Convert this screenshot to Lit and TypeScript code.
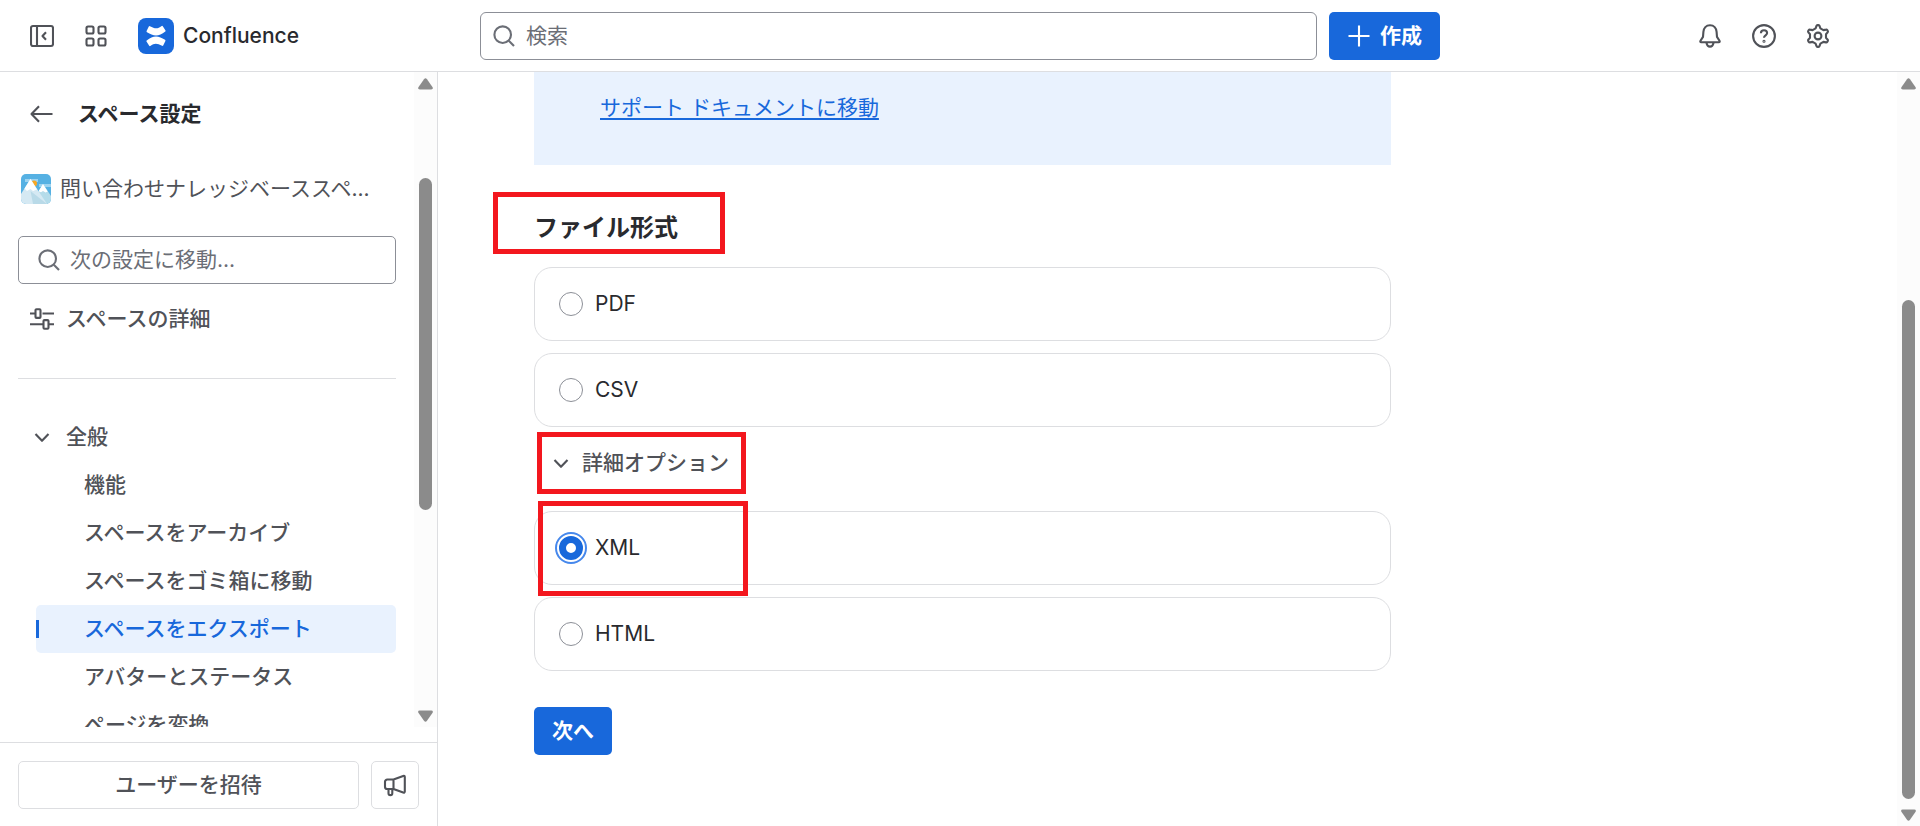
import { LitElement, html, css, svg, nothing } from "lit";
import { customElement, property, state } from "lit/decorators.js";
import { classMap } from "lit/directives/class-map.js";

const glyphs = {
  collapse: svg`<rect x="1" y="2" width="22" height="20" rx="2"/><path d="M7 2v20M16 8.2 12.5 12l3.500 3.800"/>`,
  apps: svg`<rect x="2.500" y="2.500" width="7" height="7" rx="1.500"/><rect x="14.500" y="2.500" width="7" height="7" rx="1.500"/><rect x="2.500" y="14.500" width="7" height="7" rx="1.500"/><rect x="14.500" y="14.500" width="7" height="7" rx="1.500"/>`,
  search: svg`<circle cx="10.700" cy="10.700" r="8.300"/><path d="m16.800 16.800 5.200 5.200"/>`,
  plus: svg`<path d="M12 1.500v21M1.500 12h21"/>`,
  bell: svg`<path d="M12 1.200c-4 0-6.300 3-6.600 6.600l-.4 5.100-2.500 3.900c-.5.800-.2 1.500.7 1.500h17.600c.9 0 1.200-.7.700-1.500L19 12.900l-.4-5.100C18.300 4.200 16 1.200 12 1.200Z"/><path d="M8.500 18.800c.4 2.400 1.700 3.800 3.500 3.800s3.100-1.400 3.500-3.800"/>`,
  help: svg`<circle cx="12" cy="12" r="10.900"/><path d="M8.900 9.200c0-1.700 1.400-2.900 3.100-2.900s3.100 1.200 3.100 2.800c0 2.200-3.100 2.300-3.100 4.700"/><circle cx="12" cy="17.300" r=".5"/>`,
  settings: svg`<circle cx="12" cy="12" r="3.400"/><path d="M10.500 1.900q.2-.8 1-.8h1q.8 0 1 .8l.9 2.500 3 1.700 2.600-.5q.8-.2 1.200.5l.6 1q.4.700-.2 1.300L20 10.300v3.400l1.600 1.900q.6.600.2 1.300l-.6 1q-.4.700-1.200.5l-2.600-.5-3 1.700-.9 2.500q-.2.800-1 .8h-1q-.8 0-1-.8l-.9-2.500-3-1.700-2.600.5q-.8.200-1.200-.5l-.6-1q-.4-.7.200-1.300L4 13.700v-3.400L2.400 8.400q-.6-.6-.2-1.300l.6-1q.4-.7 1.200-.5l2.600.5 3-1.700Z"/>`,
  back: svg`<path d="M22.500 12h-21M9 4.300 1.500 12 9 19.700"/>`,
  sliders: svg`<path d="M0 6.500h5M12.500 6.500H24M0 17.300h13M19 17.300h5"/><rect x="5.500" y="2.300" width="5" height="8.600" rx="1"/><rect x="13.500" y="13.100" width="5" height="8.600" rx="1"/>`,
  chevron: svg`<path d="m5.500 9 6.500 6.800L18.500 9"/>`,
  megaphone: svg`<path d="M10.500 6.500H4.300A2.300 2.300 0 0 0 2 8.800v4.900A2.300 2.300 0 0 0 4.300 16h6.200L20.200 19.600c.9.300 1.600-.1 1.600-1V3.900c0-.9-.7-1.300-1.600-1ZM10.500 6.500V16M5.500 16v4.200c0 1.100.7 1.900 1.900 1.900s1.900-.8 1.900-1.900V16"/>`,
} as const;

type GlyphName = keyof typeof glyphs;

@customElement("ui-icon")
export class UiIcon extends LitElement {
  static styles = css`
    :host {
      display: inline-flex;
      flex: none;
    }
    .glyph {
      width: 24px;
      height: 24px;
      fill: none;
      stroke: currentColor;
      stroke-width: 2.1;
      stroke-linejoin: round;
    }
  `;

  @property() name: GlyphName = "search";

  render() {
    return html`<svg class="glyph" viewBox="0 0 24 24" aria-hidden="true">${glyphs[this.name]}</svg>`;
  }
}

@customElement("scroll-rail")
export class ScrollRail extends LitElement {
  static styles = css`
    :host {
      display: flex;
      flex-direction: column;
      align-items: center;
      flex: none;
      width: 23px;
      box-sizing: border-box;
      padding: 6px 0 5px;
      background: #fcfcfc;
    }
    .arrow {
      width: 15px;
      height: 12px;
      fill: #8b8b8b;
      flex: none;
    }
    .track {
      flex: 1;
      width: 13px;
      margin: 10px 0;
      display: flex;
      flex-direction: column;
    }
    .thumb {
      border-radius: 7px;
      background: #8b8b8b;
    }
  `;

  @property({ type: Number }) before = 0;
  @property({ type: Number }) size = 50;

  render() {
    return html`
      <svg class="arrow" viewBox="0 0 15 12"><path d="M6 1.200q1.500-2 3 0l5.600 8q1 2.300-1.400 2.300H1.800Q-.6 11.500.4 9.200Z"/></svg>
      <div class="track">
        <div style="flex: ${this.before} 0 0"></div>
        <div class="thumb" style="flex: ${this.size} 0 0"></div>
        <div style="flex: ${100 - this.before - this.size} 0 0"></div>
      </div>
      <svg class="arrow" viewBox="0 0 15 12"><path d="M6 10.800q1.500 2 3 0l5.600-8Q15.600.5 13.200.5H1.800Q-.6.5.4 2.800Z"/></svg>
    `;
  }
}

@customElement("app-root")
export class AppRoot extends LitElement {
  static styles = css`
    :host {
      display: flex;
      flex-direction: column;
      height: 100vh;
      overflow: hidden;
      background: #fff;
      color: #292a2e;
      font: 400 21px/30px Inter, "Noto Sans CJK JP", sans-serif;
    }
    * {
      box-sizing: border-box;
    }
    button,
    input {
      font: inherit;
      color: inherit;
    }
    button {
      display: flex;
      align-items: center;
      justify-content: center;
      height: 48px;
      padding: 0 18px;
      border: 0;
      border-radius: 5px;
      background: none;
      font-weight: 500;
      white-space: nowrap;
    }
    a {
      color: inherit;
      text-decoration: none;
    }

    .top {
      display: grid;
      grid-template-columns: minmax(0, 1fr) minmax(0, 2fr) minmax(0, 1fr);
      align-items: center;
      flex: none;
      height: 72px;
      border-bottom: 1px solid #dddee1;
    }
    .top-start,
    .top-end {
      display: flex;
      align-items: center;
      gap: 6px;
      color: #505258;
    }
    .top-start {
      padding-left: 18px;
    }
    .top-end {
      justify-content: flex-end;
      padding-right: 78px;
    }
    .icon-button {
      width: 48px;
      padding: 0;
    }
    .product {
      display: flex;
      align-items: center;
      gap: 9px;
      margin-left: 12px;
      color: #292a2e;
      font-weight: 500;
    }
    .product-logo {
      width: 36px;
      height: 36px;
    }
    .top-middle {
      display: flex;
      gap: 12px;
    }
    .primary {
      background: #1868db;
      color: #fff;
      font-weight: 600;
    }
    .create {
      gap: 9px;
    }
    .field {
      display: flex;
      align-items: center;
      height: 48px;
      border: 1px solid #8c8f97;
      border-radius: 5px;
      background: #fff;
      color: #6b6e76;
    }
    .field input {
      flex: 1;
      min-width: 0;
      padding: 0;
      border: 0;
      outline: 0;
      background: none;
    }
    .field input::placeholder {
      color: #6b6e76;
      opacity: 1;
    }
    .global-search {
      flex: 1;
      gap: 10px;
      padding: 0 11px;
      border-radius: 6px;
    }

    .body {
      display: flex;
      flex: 1;
      min-height: 0;
    }
    .side {
      display: flex;
      flex-direction: column;
      flex: none;
      width: 438px;
      border-right: 1px solid #dddee1;
      color: #505258;
      font-weight: 500;
    }
    .side-scroll {
      display: flex;
      flex: 1;
      min-height: 0;
      margin-bottom: 15px;
    }
    .side-content {
      flex: 1;
      min-width: 0;
      overflow: hidden;
      padding: 18px 18px 0;
    }
    .row {
      display: flex;
      align-items: center;
      height: 48px;
      gap: 12px;
      padding: 0 12px;
      white-space: nowrap;
    }
    .back {
      gap: 24px;
      color: #292a2e;
    }
    .back ui-icon {
      color: #505258;
    }
    .side-title {
      margin: 0;
      font-size: 21px;
      font-weight: 700;
    }
    .space {
      gap: 9px;
      margin-top: 27px;
      padding: 0 3px;
      font-weight: 400;
    }
    .avatar {
      width: 30px;
      height: 30px;
      flex: none;
    }
    .side-search {
      gap: 9px;
      margin: 23px 0 11px;
      padding: 0 18px;
      font-weight: 400;
    }
    .rule {
      height: 1px;
      margin: 35px 0 34px;
      border: 0;
      background: #dddee1;
    }
    .group {
      width: 100%;
      justify-content: flex-start;
    }
    .items {
      margin: 0;
      padding: 0 0 0 18px;
      list-style: none;
    }
    .item {
      position: relative;
      padding-left: 48px;
      border-radius: 5px;
    }
    .item.current {
      background: #e9f2fe;
      color: #1868db;
    }
    .item.current::before {
      content: "";
      position: absolute;
      left: 0;
      width: 3px;
      height: 18px;
      background: #1868db;
    }
    .side-foot {
      display: flex;
      gap: 12px;
      padding: 18px 18px 17px;
      border-top: 1px solid #dddee1;
    }
    .outlined {
      border: 1px solid #dddee1;
    }
    .invite {
      flex: 1;
    }

    .main {
      flex: 1;
      min-width: 0;
      overflow: hidden;
      padding: 0 96px;
    }
    .column {
      max-width: 857px;
    }
    .notice {
      padding: 21px 66px 42px;
      background: #e9f2fe;
    }
    .notice a {
      color: #1868db;
      text-decoration: underline;
      text-decoration-thickness: 2px;
      text-underline-offset: 3px;
    }
    .section-title {
      position: relative;
      margin: 45px 0 22px;
      font-size: 24px;
      line-height: 35px;
      font-weight: 700;
    }
    .formats {
      display: flex;
      flex-direction: column;
      gap: 12px;
      margin: 0;
      padding: 0;
      border: 0;
    }
    .choice {
      position: relative;
      display: flex;
      align-items: center;
      gap: 12px;
      height: 74px;
      padding: 0 24px;
      border: 1px solid #dddee1;
      border-radius: 18px;
    }
    .choice input {
      appearance: none;
      width: 24px;
      height: 24px;
      margin: 0;
      border: 1px solid #8c8f97;
      border-radius: 50%;
      background: #fff;
    }
    .choice input:checked {
      border: 7px solid #1868db;
      outline: 2px solid #4688ec;
      outline-offset: 2px;
    }
    .advanced {
      position: relative;
      align-self: flex-start;
      gap: 9px;
      margin-bottom: 12px;
      padding: 0 15px;
      color: #505258;
    }
    .next {
      margin-top: 36px;
    }
    .mark {
      position: absolute;
      border: 5px solid #f3171e;
      pointer-events: none;
    }
    .mark-title {
      left: -41px;
      top: -18px;
      width: 232px;
      height: 62px;
    }
    .mark-advanced {
      left: 3px;
      top: -7px;
      width: 209px;
      height: 62px;
    }
    .mark-choice {
      left: 3px;
      top: -11px;
      width: 210px;
      height: 95px;
    }
  `;

  @state() private format = "XML";
  @state() private advancedOpen = true;

  private pages = [
    "機能",
    "スペースをアーカイブ",
    "スペースをゴミ箱に移動",
    "スペースをエクスポート",
    "アバターとステータス",
    "ページを変換",
  ];
  private currentPage = "スペースをエクスポート";

  private iconButton(name: GlyphName, label: string, outlined = false) {
    return html`<button type="button" class=${classMap({ "icon-button": true, outlined })} aria-label=${label}>
      <ui-icon name=${name}></ui-icon>
    </button>`;
  }

  private choice(name: string, marked = false) {
    return html`<label class="choice">
      <input
        type="radio"
        name="format"
        .value=${name}
        .checked=${this.format === name}
        @change=${() => (this.format = name)}
      />
      <span>${name}</span>
      ${marked ? html`<span class="mark mark-choice"></span>` : nothing}
    </label>`;
  }

  render() {
    const ribbon =
      "M8.600 12.900 10.800 8.600q.4-.7 1.100-.4c5 2.600 7.600 3 11.800-.3q.6-.4 1.100.3l2.700 4.200q.4.600-.2 1.100c-3.400 2.600-6.300 3.900-9.300 3.900s-5.800-1.400-9-3.200q-.7-.5-.4-1.300Z";
    return html`
      <header class="top">
        <div class="top-start">
          ${this.iconButton("collapse", "サイドバーを折りたたむ")} ${this.iconButton("apps", "アプリ")}
          <a class="product" href="#">
            <svg class="product-logo" viewBox="0 0 36 36" aria-hidden="true">
              <rect width="36" height="36" rx="8" fill="#1868db" />
              <g fill="#fff">
                <path d=${ribbon} />
                <path d=${ribbon} transform="rotate(180 18 18)" />
              </g>
            </svg>
            <span>Confluence</span>
          </a>
        </div>
        <div class="top-middle">
          <label class="field global-search">
            <ui-icon name="search"></ui-icon>
            <input type="search" placeholder="検索" aria-label="検索" />
          </label>
          <button type="button" class="primary create"><ui-icon name="plus"></ui-icon>作成</button>
        </div>
        <div class="top-end">
          ${this.iconButton("bell", "通知")} ${this.iconButton("help", "ヘルプ")}
          ${this.iconButton("settings", "設定")}
        </div>
      </header>

      <div class="body">
        <aside class="side">
          <div class="side-scroll">
            <nav class="side-content">
              <a class="row back" href="#">
                <ui-icon name="back"></ui-icon>
                <h2 class="side-title">スペース設定</h2>
              </a>
              <a class="row space" href="#">
                <svg class="avatar" viewBox="0 0 30 30" aria-hidden="true">
                  <clipPath id="tile"><rect width="30" height="30" rx="5" /></clipPath>
                  <g clip-path="url(#tile)">
                    <rect width="30" height="30" fill="#56b1e3" />
                    <path d="M4 5h13v3H4zM18 10h12v3H18z" fill="#9dd3f0" />
                    <circle cx="13" cy="9.500" r="3" fill="#f9a825" />
                    <path d="M15 22 22 10l8 12v8H15z" fill="#b5dcea" />
                    <path d="m22 10-4.500 7.200 2.500 1 2-1.200 2.500 1.500 2.200-1Z" fill="#fff" />
                    <path d="M0 20 9.500 5 26 30H0z" fill="#d5e9f3" />
                    <path d="M9.500 17 26 30H12z" fill="#b9dae8" />
                    <path d="M9.500 5 3.500 14.500 6 17l3.500-2 2.500 2 4-1.500Z" fill="#fff" />
                  </g>
                </svg>
                <span>問い合わせナレッジベーススペ...</span>
              </a>
              <label class="field side-search">
                <ui-icon name="search"></ui-icon>
                <input type="text" placeholder="次の設定に移動..." aria-label="次の設定に移動" />
              </label>
              <a class="row" href="#"><ui-icon name="sliders"></ui-icon><span>スペースの詳細</span></a>
              <hr class="rule" />
              <button type="button" class="row group" aria-expanded="true">
                <ui-icon name="chevron"></ui-icon><span>全般</span>
              </button>
              <ul class="items">
                ${this.pages.map(
                  (page) => html`<li>
                    <a class=${classMap({ row: true, item: true, current: page === this.currentPage })} href="#">${page}</a>
                  </li>`,
                )}
              </ul>
            </nav>
            <scroll-rail .before=${13} .size=${55.3}></scroll-rail>
          </div>
          <div class="side-foot">
            <button type="button" class="outlined invite">ユーザーを招待</button>
            ${this.iconButton("megaphone", "フィードバック", true)}
          </div>
        </aside>

        <main class="main">
          <div class="column">
            <div class="notice"><a href="#">サポート ドキュメントに移動</a></div>
            <h2 class="section-title">ファイル形式<span class="mark mark-title"></span></h2>
            <fieldset class="formats" aria-label="ファイル形式">
              ${this.choice("PDF")} ${this.choice("CSV")}
              <button
                type="button"
                class="advanced"
                aria-expanded=${this.advancedOpen}
                @click=${() => (this.advancedOpen = !this.advancedOpen)}
              >
                <ui-icon name="chevron"></ui-icon>詳細オプション<span class="mark mark-advanced"></span>
              </button>
              ${this.advancedOpen ? html`${this.choice("XML", true)} ${this.choice("HTML")}` : nothing}
            </fieldset>
            <button type="button" class="primary next">次へ</button>
          </div>
        </main>
        <scroll-rail .before=${28.6} .size=${71.4}></scroll-rail>
      </div>
    `;
  }
}
